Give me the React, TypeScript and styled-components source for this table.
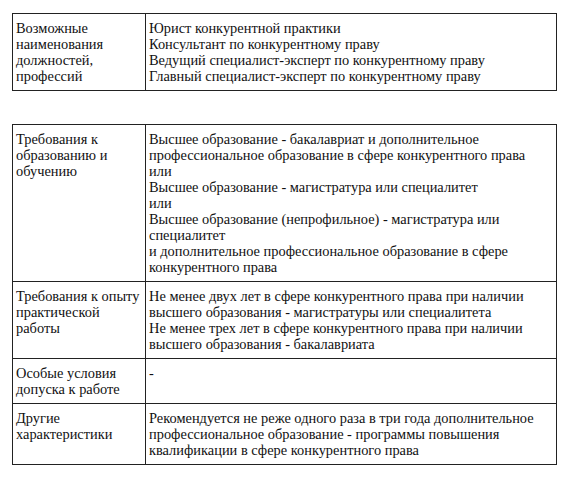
import styled, { createGlobalStyle } from 'styled-components';

const GlobalStyle = createGlobalStyle`
  html, body {
    margin: 0;
    padding: 0;
    background: #ffffff;
  }
  body {
    font-family: 'Liberation Serif', 'Times New Roman', serif;
  }
`;

const Page = styled.div`
  padding: 13px 18px 0 12px;
  width: 575px;
  box-sizing: border-box;
  display: flex;
  flex-direction: column;
  gap: 33px;
`;

const Table = styled.table`
  width: 545px;
  border-collapse: collapse;
  table-layout: fixed;
  border: 1px solid #222;
  font-family: 'Liberation Serif', 'Times New Roman', serif;
  font-size: 14.4px;
  line-height: 16px;
  color: #111;
`;

const Row = styled.tr`
  border-bottom: 1px solid #222;
`;

const Cell = styled.td<{ $label?: boolean }>`
  vertical-align: top;
  padding: 6px 3px 6px 3px;
  width: ${({ $label }) => ($label ? '126px' : 'auto')};
  border-right: ${({ $label }) => ($label ? '1px solid #222' : 'none')};
`;

const Line = styled.div`
  white-space: nowrap;
`;

type Entry = { label: string[]; value: string[] };

const names: Entry = {
  label: ['Возможные', 'наименования', 'должностей,', 'профессий'],
  value: [
    'Юрист конкурентной практики',
    'Консультант по конкурентному праву',
    'Ведущий специалист-эксперт по конкурентному праву',
    'Главный специалист-эксперт по конкурентному праву',
  ],
};

const requirements: Entry[] = [
  {
    label: ['Требования к', 'образованию и', 'обучению'],
    value: [
      'Высшее образование - бакалавриат и дополнительное',
      'профессиональное образование в сфере конкурентного права',
      'или',
      'Высшее образование - магистратура или специалитет',
      'или',
      'Высшее образование (непрофильное) - магистратура или',
      'специалитет',
      'и дополнительное профессиональное образование в сфере',
      'конкурентного права',
    ],
  },
  {
    label: ['Требования к опыту', 'практической', 'работы'],
    value: [
      'Не менее двух лет в сфере конкурентного права при наличии',
      'высшего образования - магистратуры или специалитета',
      'Не менее трех лет в сфере конкурентного права при наличии',
      'высшего образования - бакалавриата',
    ],
  },
  {
    label: ['Особые условия', 'допуска к работе'],
    value: ['-'],
  },
  {
    label: ['Другие', 'характеристики'],
    value: [
      'Рекомендуется не реже одного раза в три года дополнительное',
      'профессиональное образование - программы повышения',
      'квалификации в сфере конкурентного права',
    ],
  },
];

const EntryRow = ({ entry }: { entry: Entry }) => (
  <Row>
    <Cell $label>
      {entry.label.map((l, i) => (
        <Line key={i}>{l}</Line>
      ))}
    </Cell>
    <Cell>
      {entry.value.map((l, i) => (
        <Line key={i}>{l}</Line>
      ))}
    </Cell>
  </Row>
);

export default function App() {
  return (
    <>
      <GlobalStyle />
      <Page>
        <Table>
          <tbody>
            <EntryRow entry={names} />
          </tbody>
        </Table>
        <Table>
          <tbody>
            {requirements.map((entry, i) => (
              <EntryRow key={i} entry={entry} />
            ))}
          </tbody>
        </Table>
      </Page>
    </>
  );
}
